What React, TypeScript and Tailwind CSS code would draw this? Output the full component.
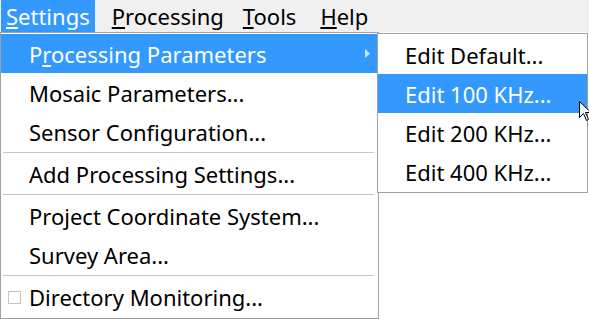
import React from "react";

const font = { fontFamily: '"Noto Sans", "Open Sans", sans-serif' };

function Item({ children, active, arrow, check }: { children: React.ReactNode; active?: boolean; arrow?: boolean; check?: boolean }) {
  return (
    <div className={`relative flex h-[39px] items-center pl-[28px] pr-3 text-[22px] ${active ? "bg-[#3399ff] text-white" : "text-black"}`}>
      {check && <span className="absolute left-[7px] top-[14px] h-[13px] w-[13px] border border-[#c4c4c4] bg-white" />}
      <span className="leading-none">{children}</span>
      {arrow && (
        <svg className="absolute left-[364px] top-[15px]" width="5" height="9" viewBox="0 0 5 9">
          <path d="M0 0 L5 4.5 L0 9 Z" fill="#cfe6ff" />
        </svg>
      )}
    </div>
  );
}

function Sep() {
  return (
    <div className="flex h-[3px] items-center pl-[2px] pr-[4px]">
      <div className="h-px w-full bg-[#c6c6c6]" />
    </div>
  );
}

function SubItem({ children, active }: { children: React.ReactNode; active?: boolean }) {
  return (
    <div className={`flex h-[39px] items-center pl-[27px] text-[22px] ${active ? "bg-[#3399ff] text-white" : "text-black"}`}>
      <span className="leading-none">{children}</span>
    </div>
  );
}

export default function App() {
  return (
    <div className="relative h-[319px] w-[589px] overflow-hidden bg-white" style={font}>
      <div className="flex h-[32px] items-stretch bg-[#f0f0f0] text-[22px] text-black">
        <div className="ml-[1px] flex items-center bg-[#3399ff] px-[5px] text-white">
          <span className="leading-none"><u>S</u>ettings</span>
        </div>
        <div className="ml-[12px] flex items-center px-[5px]"><span className="leading-none"><u>P</u>rocessing</span></div>
        <div className="ml-[9px] flex items-center px-[5px]"><span className="leading-none"><u>T</u>ools</span></div>
        <div className="ml-[14px] flex items-center px-[5px]"><span className="leading-none"><u>H</u>elp</span></div>
      </div>

      <div className="absolute left-0 top-[32px] flex h-[287px] w-[379px] flex-col border border-[#a0a0a0] bg-white pt-[1px]">
        <Item active arrow>P<u>r</u>ocessing Parameters</Item>
        <Item>Mosaic Parameters...</Item>
        <Item>Sensor Configuration...</Item>
        <Sep />
        <Item>Add Processing Settings...</Item>
        <Sep />
        <Item>Project Coordinate System...</Item>
        <Item>Survey Area...</Item>
        <Sep />
        <Item check>Directory Monitoring...</Item>
      </div>

      <div className="absolute left-[377px] top-[33px] flex h-[160px] w-[211px] flex-col border border-[#a0a0a0] bg-white pt-[1px]">
        <SubItem>Edit Default...</SubItem>
        <SubItem active>Edit 100 KHz...</SubItem>
        <SubItem>Edit 200 KHz...</SubItem>
        <SubItem>Edit 400 KHz...</SubItem>
      </div>

      <svg className="absolute left-[579px] top-[101px]" width="13" height="21" viewBox="0 0 13 21">
        <path d="M0.5 0.5 L0.5 16.5 L4.5 12.5 L7.5 19.5 L9.5 18.5 L6.5 11.5 L12 11.5 Z" fill="#fff" stroke="#000" strokeWidth="1" />
      </svg>
    </div>
  );
}
